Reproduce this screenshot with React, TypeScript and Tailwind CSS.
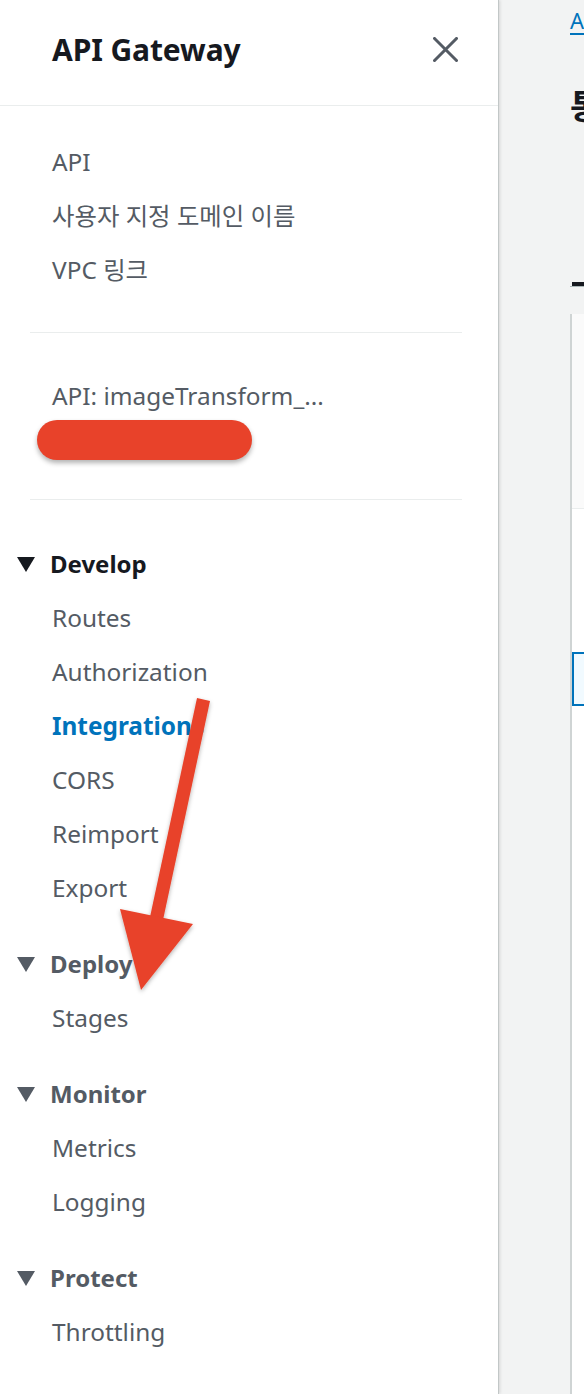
import type { ReactNode } from "react";

const FONT = "font-['Noto_Sans','Noto_Sans_CJK_KR',sans-serif]";

function Caret({ dark }: { dark?: boolean }) {
  return (
    <svg width="18" height="15" viewBox="0 0 18 15" className="shrink-0">
      <polygon points="0,0 18,0 9,15" fill={dark ? "#16191f" : "#545b64"} />
    </svg>
  );
}

function NavItem({ children, active }: { children: ReactNode; active?: boolean }) {
  return (
    <div
      className={
        active
          ? "h-[54px] flex items-center pl-[52px] text-[24.4px] font-bold text-[#0073bb] whitespace-nowrap"
          : "h-[54px] flex items-center pl-[52px] text-[24.4px] text-[#545b64] whitespace-nowrap"
      }
    >
      {children}
    </div>
  );
}

function Section({
  title,
  items,
  active,
  dark,
  first,
}: {
  title: string;
  items: string[];
  active?: string;
  dark?: boolean;
  first?: boolean;
}) {
  return (
    <div className={first ? "" : "mt-[22px]"}>
      <div className="h-[54px] flex items-center pl-[17px] gap-[15px]">
        <Caret dark={dark} />
        <span
          className={
            dark
              ? "text-[24px] font-bold text-[#16191f]"
              : "text-[24px] font-bold text-[#545b64]"
          }
        >
          {title}
        </span>
      </div>
      {items.map((item) => (
        <NavItem key={item} active={item === active}>
          {item}
        </NavItem>
      ))}
    </div>
  );
}

export default function App() {
  return (
    <div className={`${FONT} relative flex w-[584px] h-[1394px] overflow-hidden bg-[#f2f3f3]`}>
      {/* sidebar */}
      <aside className="w-[499px] shrink-0 h-full bg-white border-r border-[#c2c7c7] shadow-[1px_0_3px_rgba(0,0,0,0.12)]">
        <div className="h-[106px] border-b border-[#eaeded] flex items-center justify-between pl-[52px] pr-[40px] pb-[7px]">
          <h2 className="text-[30px] font-bold text-[#16191f] tracking-[-0.1px]">API Gateway</h2>
          <svg width="25" height="25" viewBox="0 0 25 25">
            <path d="M1.5 1.5 23.5 23.5 M23.5 1.5 1.5 23.5" stroke="#545b64" strokeWidth="3" strokeLinecap="square" />
          </svg>
        </div>

        <div className="pt-[29px]">
          <NavItem>API</NavItem>
          <NavItem>사용자 지정 도메인 이름</NavItem>
          <NavItem>VPC 링크</NavItem>
        </div>

        <div className="ml-[30px] w-[432px] mt-[35px] border-t border-[#eaeded]" />

        <div className="pt-[36px] h-[166px]">
          <NavItem>API: imageTransform_...</NavItem>
        </div>

        <div className="ml-[30px] w-[432px] border-t border-[#eaeded]" />

        <div className="pt-[37px]">
          <Section
            first
            dark
            title="Develop"
            active="Integrations"
            items={["Routes", "Authorization", "Integrations", "CORS", "Reimport", "Export"]}
          />
          <Section title="Deploy" items={["Stages"]} />
          <Section title="Monitor" items={["Metrics", "Logging"]} />
          <Section title="Protect" items={["Throttling"]} />
        </div>
      </aside>

      {/* main content, mostly cut off */}
      <main className="flex-1 min-w-0 pl-[71px] overflow-hidden">
        <div className="w-[600px]">
          <div className="pt-[4px] h-[40px]">
            <span className="text-[22px] text-[#0073bb] underline underline-offset-[4px]">API Gateway</span>
          </div>
          <h1 className="mt-[44px] text-[34px] font-bold text-[#16191f] leading-[44px]">통합</h1>
          <div className="mt-[154px] border-b border-[#aab7b8]">
            <div className="ml-[2px] w-[120px] h-[4px] bg-[#16191f]" />
          </div>
          <div className="mt-[27px] border-l-2 border-[#cfd4d4] bg-white h-[1100px]">
            <div className="h-[195px] bg-[#fafafa] border-b border-[#eaeded]" />
            <div className="mt-[143px] h-[54px] border-2 border-[#0073bb] bg-[#f1faff]" />
          </div>
        </div>
      </main>

      {/* redaction mark */}
      <div className="absolute left-[37px] top-[420px] w-[215px] h-[40px] rounded-full bg-[#e8422a] shadow-[0_3px_5px_rgba(0,0,0,0.3)]" />

      {/* annotation arrow */}
      <svg
        className="absolute left-0 top-0 pointer-events-none"
        width="584"
        height="1394"
        viewBox="0 0 584 1394"
      >
        <defs>
          <filter id="sh" x="-20%" y="-20%" width="140%" height="140%">
            <feDropShadow dx="0" dy="2" stdDeviation="2" floodColor="#000" floodOpacity="0.3" />
          </filter>
        </defs>
        <g filter="url(#sh)" fill="#e8422a">
          <polygon points="197,698 210,701 163,920 150,917" />
          <polygon points="120,909 193,924 141,990" />
        </g>
      </svg>
    </div>
  );
}
